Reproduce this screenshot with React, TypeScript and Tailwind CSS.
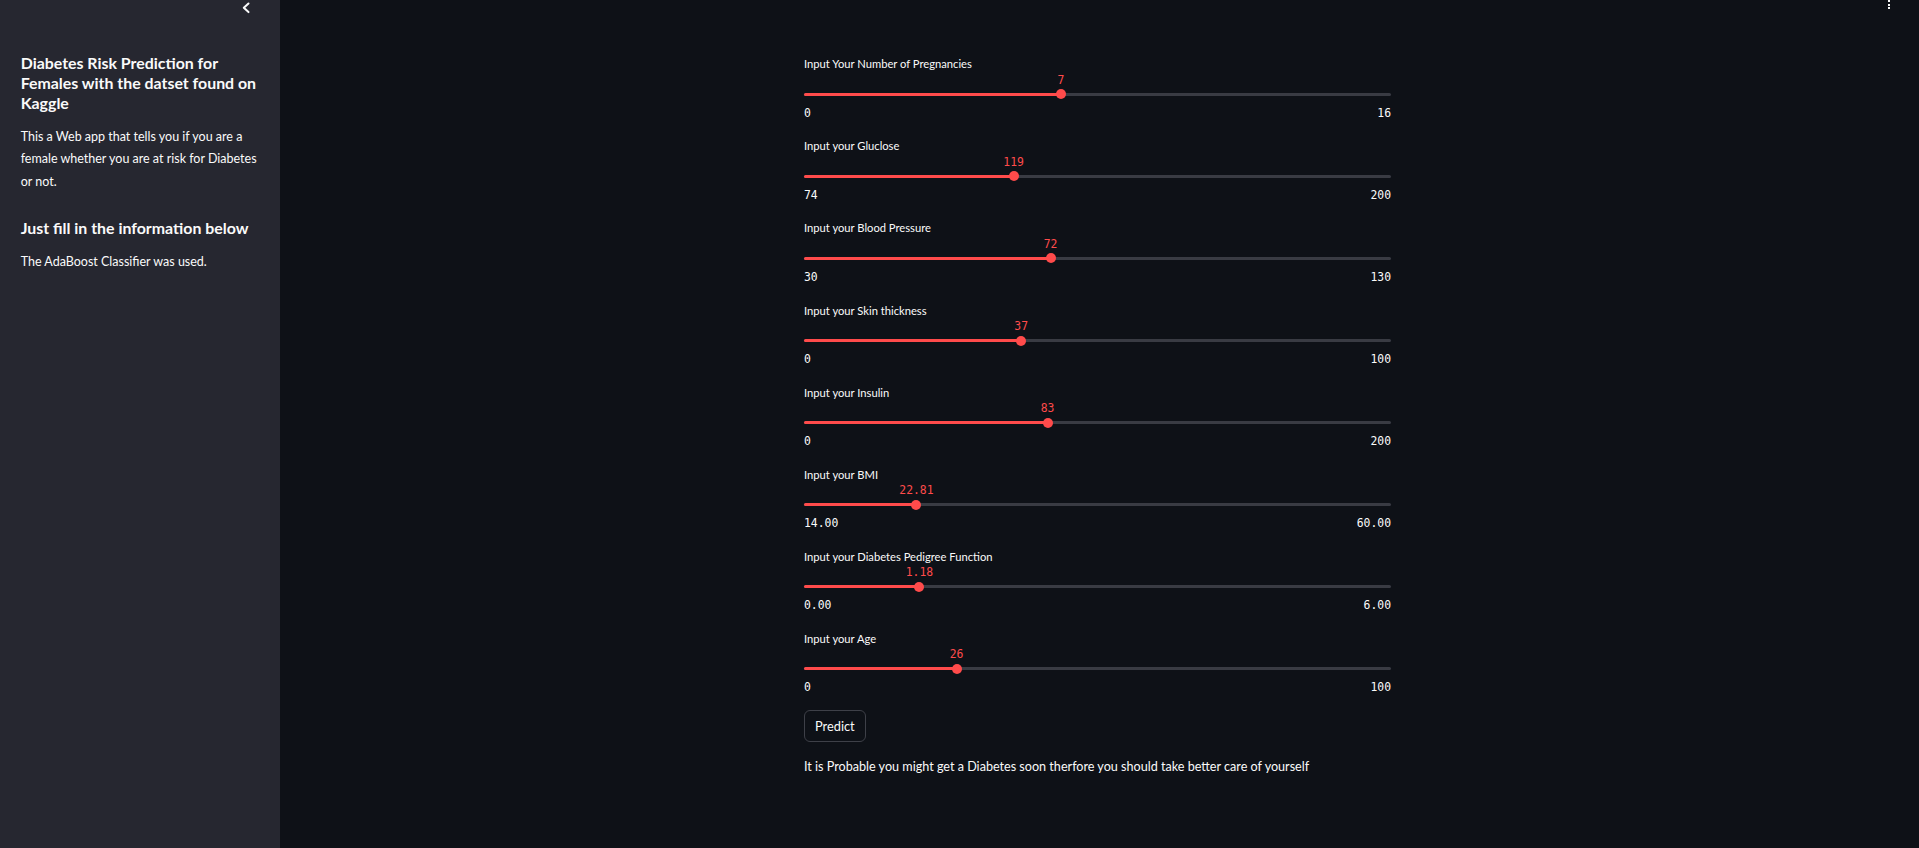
import React from "react";

const SANS = "font-['Lato','Noto_Sans',sans-serif]";
const MONO = "font-['DejaVu_Sans_Mono','Liberation_Mono',monospace]";

type S = { label: string; value: number; min: number; max: number; fmt: (n: number) => string };

const i = (n: number) => String(n);
const f = (n: number) => n.toFixed(2);

const sliders: S[] = [
  { label: "Input Your Number of Pregnancies", value: 7, min: 0, max: 16, fmt: i },
  { label: "Input your Gluclose", value: 119, min: 74, max: 200, fmt: i },
  { label: "Input your Blood Pressure", value: 72, min: 30, max: 130, fmt: i },
  { label: "Input your Skin thickness", value: 37, min: 0, max: 100, fmt: i },
  { label: "Input your Insulin", value: 83, min: 0, max: 200, fmt: i },
  { label: "Input your BMI", value: 22.81, min: 14, max: 60, fmt: f },
  { label: "Input your Diabetes Pedigree Function", value: 1.18, min: 0, max: 6, fmt: f },
  { label: "Input your Age", value: 26, min: 0, max: 100, fmt: i },
];

function Slider({ s }: { s: S }) {
  const pct = ((s.value - s.min) / (s.max - s.min)) * 100;
  return (
    <div className="mb-[18.7px]">
      <div className={`${SANS} text-[11.2px] leading-[16px] text-[#fafafa] h-[16px]`}>{s.label}</div>
      <div className="pt-[20.5px]">
        <div className="relative h-[3px] bg-[#393b43] rounded-full">
          <div className="absolute left-0 top-0 h-[3px] bg-[#ff4b4b] rounded-full" style={{ width: `${pct}%` }} />
          <div
            className="absolute top-[-3.5px] w-[10px] h-[10px] rounded-full bg-[#ff4b4b] -translate-x-1/2"
            style={{ left: `${pct}%` }}
          />
          <div
            className={`${MONO} absolute top-[-20px] text-[11.4px] leading-[14px] text-[#ff4b4b] -translate-x-1/2 whitespace-nowrap`}
            style={{ left: `${pct}%` }}
          >
            {s.fmt(s.value)}
          </div>
        </div>
      </div>
      <div className={`${MONO} mt-[9.9px] flex justify-between text-[11.4px] leading-[14px] text-[#fafafa]`}>
        <span>{s.fmt(s.min)}</span>
        <span>{s.fmt(s.max)}</span>
      </div>
    </div>
  );
}

export default function App() {
  return (
    <div className="flex w-full h-[848px] overflow-hidden bg-[#0e1117]">
      <aside className={`relative w-[280px] shrink-0 h-full bg-[#262730] ${SANS} text-[#fafafa]`}>
        <svg className="absolute left-[240px] top-[1px]" width="12" height="14" viewBox="0 0 12 14">
          <polyline points="8.5,2.5 3.8,6.8 8.5,11.1" fill="none" stroke="#fafafa" strokeWidth="2" strokeLinecap="round" strokeLinejoin="round" />
        </svg>
        <div className="pl-[20.7px] pt-[53px]">
          <h2 className="text-[15.9px] leading-[20px] font-bold whitespace-nowrap">
            Diabetes Risk Prediction for
            <br />
            Females with the datset found on
            <br />
            Kaggle
          </h2>
          <p className="mt-[12.8px] text-[12.5px] leading-[22.4px] whitespace-nowrap">
            This a Web app that tells you if you are a
            <br />
            female whether you are at risk for Diabetes
            <br />
            or not.
          </p>
          <h3 className="mt-[25px] text-[15.9px] leading-[20px] font-bold whitespace-nowrap">
            Just fill in the information below
          </h3>
          <p className="mt-[12.8px] text-[12.5px] leading-[22.4px] whitespace-nowrap">The AdaBoost Classifier was used.</p>
        </div>
      </aside>
      <main className="relative flex-1 h-full flex justify-center pr-[4px]">
        <div className="absolute right-[29px] top-0 flex flex-col gap-[1.5px]">
          <div className="w-[2.5px] h-[2px] bg-[#fafafa]" />
          <div className="w-[2.5px] h-[2px] bg-[#fafafa]" />
          <div className="w-[2.5px] h-[2px] bg-[#fafafa]" />
        </div>
        <div className="w-[587px] pt-[56.3px]">
          {sliders.map((s) => (
            <Slider key={s.label} s={s} />
          ))}
          <div className="-mt-[2.8px]">
            <button
              className={`${SANS} h-[32px] px-[10px] rounded-[6px] border border-[#3e4048] bg-[#0e1117] text-[12.8px] text-[#fafafa]`}
            >
              Predict
            </button>
          </div>
          <p className={`${SANS} mt-[15px] text-[12.6px] leading-[20px] text-[#fafafa] whitespace-nowrap`}>
            It is Probable you might get a Diabetes soon therfore you should take better care of yourself
          </p>
        </div>
      </main>
    </div>
  );
}
